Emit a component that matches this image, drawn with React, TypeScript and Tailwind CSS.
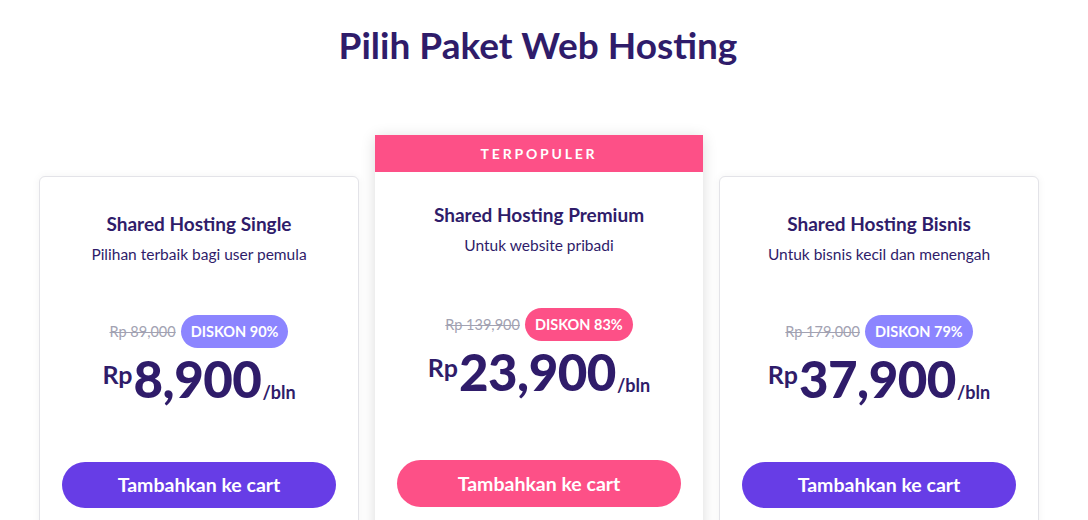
import React from 'react'

interface Plan {
  name: string
  desc: string
  oldPrice: string
  discount: string
  price: string
  popular?: boolean
}

const plans: Plan[] = [
  { name: 'Shared Hosting Single', desc: 'Pilihan terbaik bagi user pemula', oldPrice: 'Rp 89,000', discount: 'DISKON 90%', price: '8,900' },
  { name: 'Shared Hosting Premium', desc: 'Untuk website pribadi', oldPrice: 'Rp 139,900', discount: 'DISKON 83%', price: '23,900', popular: true },
  { name: 'Shared Hosting Bisnis', desc: 'Untuk bisnis kecil dan menengah', oldPrice: 'Rp 179,000', discount: 'DISKON 79%', price: '37,900' },
]

function PlanBody({ plan }: { plan: Plan }) {
  const pop = !!plan.popular
  return (
    <div className={`flex flex-col items-center px-[22px] ${pop ? 'pt-[31px]' : 'pt-[35px]'}`}>
      <h2 className="text-[19px] leading-[24px] font-bold text-[#2f1c6a]">{plan.name}</h2>
      <p className="mt-[7px] text-[15.5px] leading-[22px] text-[#2f1c6a]">{plan.desc}</p>

      {/* Discount row */}
      <div className={`flex items-center gap-[5px] ${pop ? 'mt-[52px]' : 'mt-[50px]'}`}>
        <span className="text-[14.5px] text-[#a2a2b2] line-through">{plan.oldPrice}</span>
        <span className={`h-[33px] px-[10px] rounded-full flex items-center text-[14.5px] font-bold text-white ${pop ? 'bg-[#fd5087]' : 'bg-[#8c85ff]'}`}>
          {plan.discount}
        </span>
      </div>

      {/* Price */}
      <div className="mt-[5px] flex items-end text-[#2f1c6a] font-bold h-[52px]">
        <span className="self-start mt-[9px] text-[25px] leading-[25px] pr-[1px]">Rp</span>
        <span className="text-[51px] leading-[52px] font-black tracking-[-0.5px]">{plan.price}</span>
        <span className="text-[18px] leading-[18px] mb-[4px] pl-[1px]">/bln</span>
      </div>

      <button
        className={`w-full rounded-full text-white text-[19.5px] font-bold ${
          pop ? 'mt-[62px] bg-[#fd5087] h-[47px]' : 'mt-[57px] bg-[#673de6] h-[46px]'
        }`}
      >
        Tambahkan ke cart
      </button>
    </div>
  )
}

export default function App() {
  return (
    <div className="w-[1088px] h-[520px] overflow-hidden bg-white font-['Lato',sans-serif]">
      <h1 className="pt-[23px] pr-[12px] text-center text-[37px] leading-[44px] font-bold text-[#2f1c6a]">
        Pilih Paket Web Hosting
      </h1>

      <div className="mt-[68px] pl-[39px] flex items-start gap-4">
        {/* Single */}
        <div className="mt-[41px] w-[320px] h-[400px] bg-white border border-[#e3e3e8] rounded-[6px] shadow-[0_0_8px_rgba(0,0,0,0.05)]">
          <PlanBody plan={plans[0]} />
        </div>

        {/* Premium */}
        <div className="w-[328px] h-[440px] bg-white shadow-[0_2px_14px_rgba(0,0,0,0.14)]">
          <div className="h-[37px] bg-[#fd5087] flex items-center justify-center text-white text-[14px] font-bold tracking-[0.2em]">
            TERPOPULER
          </div>
          <PlanBody plan={plans[1]} />
        </div>

        {/* Bisnis */}
        <div className="mt-[41px] w-[320px] h-[400px] bg-white border border-[#e3e3e8] rounded-[6px] shadow-[0_0_8px_rgba(0,0,0,0.05)]">
          <PlanBody plan={plans[2]} />
        </div>
      </div>
    </div>
  )
}
